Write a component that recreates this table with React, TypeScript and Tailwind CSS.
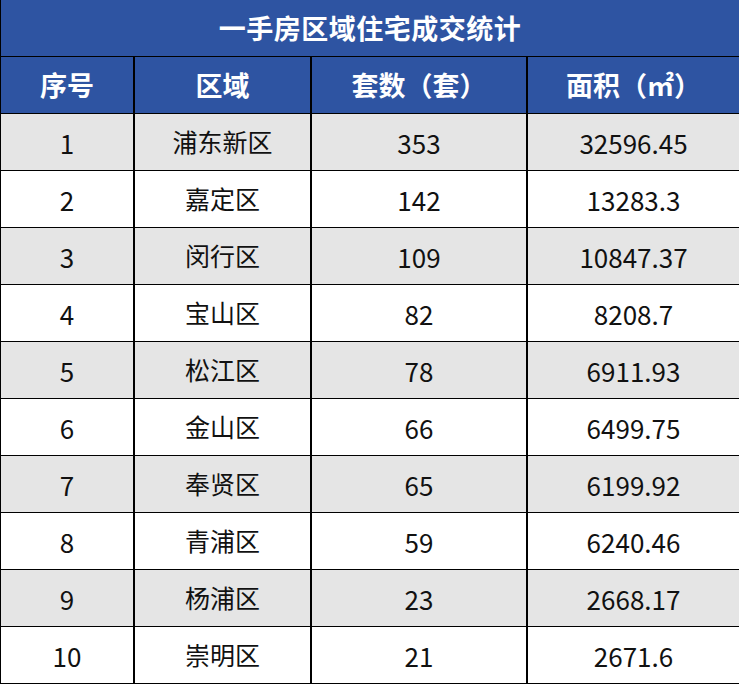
const rows: [string, string, string, string][] = [
  ["1", "浦东新区", "353", "32596.45"],
  ["2", "嘉定区", "142", "13283.3"],
  ["3", "闵行区", "109", "10847.37"],
  ["4", "宝山区", "82", "8208.7"],
  ["5", "松江区", "78", "6911.93"],
  ["6", "金山区", "66", "6499.75"],
  ["7", "奉贤区", "65", "6199.92"],
  ["8", "青浦区", "59", "6240.46"],
  ["9", "杨浦区", "23", "2668.17"],
  ["10", "崇明区", "21", "2671.6"],
];

const headers = ["序号", "区域", "套数（套）", "面积（㎡）"];

// column widths incl. right border
const cols = "grid grid-cols-[134px_177px_216px_1fr]";

const App = () => {
  return (
    <div className="w-[739px] h-[684px] bg-white font-['Noto_Sans_CJK_SC','Liberation_Sans',sans-serif] border-l-[1.5px] border-black overflow-hidden">
      {/* title */}
      <div className="h-[57px] flex items-center justify-center bg-[#2e54a2] border-b-[1.5px] border-black text-white text-[27px] font-bold tracking-[0.5px]">
        一手房区域住宅成交统计
      </div>

      {/* header row */}
      <div className={`${cols} h-[57px] bg-[#2e54a2] border-b-[1.5px] border-black text-white text-[27px] font-bold`}>
        {headers.map((h, i) => (
          <div
            key={h}
            className={`flex items-center justify-center ${i < 3 ? "border-r-2 border-black" : ""}`}
          >
            {h}
          </div>
        ))}
      </div>

      {rows.map((r, idx) => (
        <div
          key={r[0]}
          className={`${cols} h-[57px] border-b-[1.5px] border-black text-[#111] ${idx % 2 === 0 ? "bg-[#e5e5e5]" : "bg-white"}`}
        >
          {r.map((c, i) => (
            <div
              key={i}
              className={`flex items-center justify-center ${i === 1 ? "text-[25px]" : "text-[26px]"} ${i < 3 ? "border-r-2 border-black" : ""}`}
            >
              {c}
            </div>
          ))}
        </div>
      ))}
    </div>
  );
};

export default App;
